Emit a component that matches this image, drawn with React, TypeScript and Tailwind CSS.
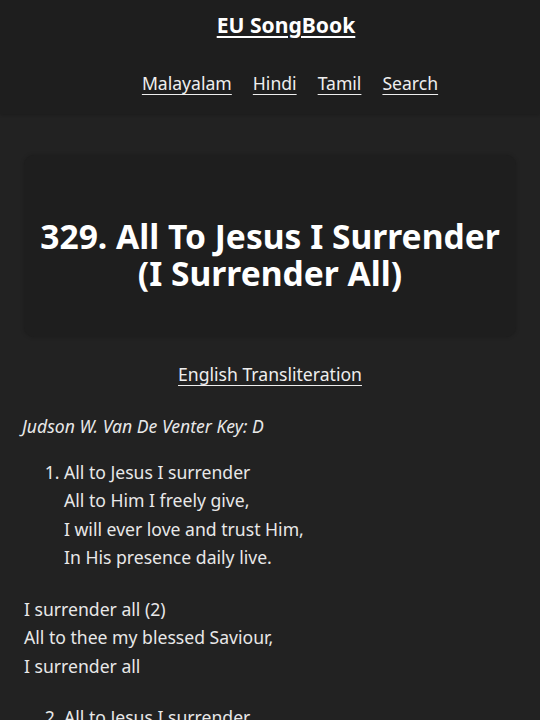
import React from "react";

const verse1 = [
  "All to Jesus I surrender",
  "All to Him I freely give,",
  "I will ever love and trust Him,",
  "In His presence daily live.",
];

const chorus = [
  "I surrender all (2)",
  "All to thee my blessed Saviour,",
  "I surrender all",
];

const App = () => {
  return (
    <div className="min-h-[720px] bg-[#222222] text-[#e8e8e8] font-['Noto_Sans',sans-serif] overflow-hidden">
      {/* Header */}
      <header className="bg-[#1e1e1e] h-[114px] shadow-[0_1px_3px_rgba(0,0,0,0.2)]">
        <div className="pt-[10px] pl-[32px] text-center leading-[30px]">
          <a href="#" className="text-[21.1px] font-bold text-white underline underline-offset-[3px]">
            EU SongBook
          </a>
        </div>
        <nav className="mt-[27px] pl-[40px] flex justify-center gap-[21px] text-[17.6px] leading-[28px]">
          <a href="#" className="underline underline-offset-[4px] text-[#eeeeee]">Malayalam</a>
          <a href="#" className="underline underline-offset-[4px] text-[#eeeeee]">Hindi</a>
          <a href="#" className="underline underline-offset-[4px] text-[#eeeeee]">Tamil</a>
          <a href="#" className="underline underline-offset-[4px] text-[#eeeeee]">Search</a>
        </nav>
      </header>

      <main className="px-[24px]">
        {/* Title card */}
        <div className="mt-[41px] bg-[#1e1e1e] rounded-[10px] pt-[63px] pb-[45px] shadow-[0_0_4px_rgba(0,0,0,0.2)]">
          <h1 className="text-center text-[33.6px] leading-[37px] font-bold text-white">
            329. All To Jesus I Surrender
            <br />
            (I Surrender All)
          </h1>
        </div>

        <div className="mt-[23px] text-center leading-[28px]">
          <a href="#" className="text-[17.6px] underline underline-offset-[4px] text-[#eeeeee]">
            English Transliteration
          </a>
        </div>

        <p className="mt-[23px] -ml-[2px] italic text-[17.6px] leading-[28px]">
          Judson W. Van De Venter Key: D
        </p>

        <ol className="mt-[18px] pl-[40px] list-decimal text-[17.6px] leading-[28.4px]">
          <li>
            {verse1.map((l) => (
              <div key={l}>{l}</div>
            ))}
          </li>
        </ol>

        <div className="mt-[23.6px] text-[17.6px] leading-[28.2px]">
          {chorus.map((l) => (
            <div key={l}>{l}</div>
          ))}
        </div>

        <ol start={2} className="mt-[23.6px] pl-[40px] list-decimal text-[17.6px] leading-[28.4px]">
          <li>
            <div>All to Jesus I surrender</div>
            <div>Humbly at His feet I bow,</div>
          </li>
        </ol>
      </main>
    </div>
  );
};

export default App;
